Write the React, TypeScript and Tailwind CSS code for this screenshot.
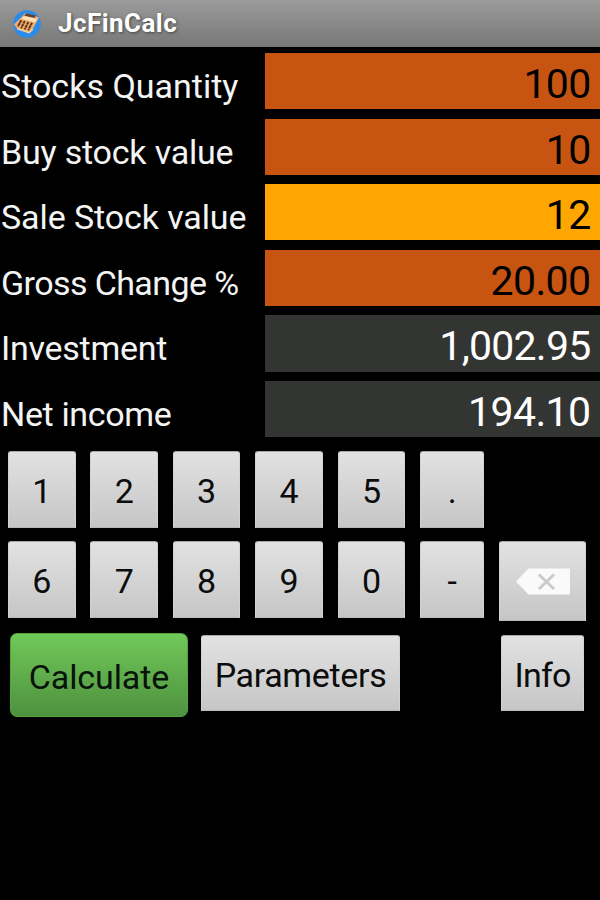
import React from "react";

const fields = [
  { label: "Stocks Quantity", value: "100", tone: "bg-[#c75511] text-black tracking-[-0.7px]", track: "tracking-[0px]" },
  { label: "Buy stock value", value: "10", tone: "bg-[#c75511] text-black tracking-[-0.7px]", track: "tracking-[-0.2px]" },
  { label: "Sale Stock value", value: "12", tone: "bg-[#ffa600] text-black tracking-[-0.7px]", track: "tracking-[-0.1px]" },
  { label: "Gross Change %", value: "20.00", tone: "bg-[#c75511] text-black tracking-[-0.6px]", track: "tracking-[-0.6px]" },
  { label: "Investment", value: "1,002.95", tone: "bg-[#333533] text-white tracking-[-0.75px]", track: "tracking-[-0.25px]" },
  { label: "Net income", value: "194.10", tone: "bg-[#333533] text-white tracking-[-0.6px]", track: "tracking-[-0.35px]" },
];

const keyRows = [
  ["1", "2", "3", "4", "5", "."],
  ["6", "7", "8", "9", "0", "-"],
];

const face =
  "block shrink-0 whitespace-nowrap rounded-t-[3px] border border-t-[#a9a9a9] border-x-[#d2d2d2] border-b-[#b9b9b9] bg-linear-to-b from-[#e2e2e2] to-[#c6c6c6] text-center text-[34px] text-[#0c0c0c]";

function AppIcon() {
  return (
    <svg className="ml-[13px] size-7 shrink-0" viewBox="0 0 28 28">
      <circle cx="14" cy="14" r="13.8" fill="#2b8be8" />
      <path d="M1 14.5 12.5 3 26 7.5l-6.5 12L16 22.5 4 18.5z" fill="#f0ae72" />
      <path d="M13 3.2 22.5 5.6l-.8 2.5-10.3-2.4z" fill="#5f4230" />
      <path d="M11 5.9 24 9l-2 3.2L8.6 8.7z" fill="#ffe2b8" />
      <path
        d="M8.3 10.2 4.8 16.6M11.8 11 8 18.3M15.4 12l-3.8 7.4M19 12.8l-3.8 7.4"
        stroke="#603315"
        strokeWidth="2"
        strokeDasharray="2.9 .4"
      />
      <path d="m4 18.7 12 4 3.8-3.4" fill="none" stroke="#ffd29c" strokeWidth="1.3" />
    </svg>
  );
}

function Backspace() {
  return (
    <svg className="ml-px h-[27px] w-[54px]" viewBox="0 0 54 27">
      <path d="M0 13.5 12.5.5H54v26H12.5z" fill="#fafafa" />
      <path d="m23 6.5 15 14.5m0-14.5L23 21" stroke="#c9cacd" strokeWidth="3" />
    </svg>
  );
}

export default function App() {
  return (
    <div className="flex h-[900px] w-[600px] flex-col overflow-hidden bg-black font-['Roboto',sans-serif]">
      <header className="flex h-[47px] shrink-0 items-center bg-linear-to-b from-[#9b9b9b] to-[#777777]">
        <AppIcon />
        <h1 className="ml-[17px] text-[26px] leading-[47px] font-bold tracking-[0.45px] text-white [text-shadow:1px_1px_3px_#444]">
          JcFinCalc
        </h1>
      </header>

      <section className="mt-[6px] flex h-[385px] shrink-0 flex-col gap-[9.4px]">
        {fields.map((f) => (
          <div key={f.label} className="flex h-[56.2px] shrink-0">
            <div className={`w-[265px] shrink-0 pl-px text-[34px] leading-[66px] whitespace-nowrap text-[#f4f4f4] ${f.track}`}>
              {f.label}
            </div>
            <div className={`flex-1 pr-[9.5px] text-right text-[41px] leading-[62px] ${f.tone}`}>{f.value}</div>
          </div>
        ))}
      </section>

      <section className="mt-[13px] flex h-[170px] shrink-0 flex-col gap-[13.5px] pl-2">
        {keyRows.map((row, r) => (
          <div key={r} className="flex items-start gap-[14.95px]">
            {row.map((k, i) => (
              <button key={k} className={`${face} h-[76.5px] leading-[79px] ${i === 5 ? "w-[64px]" : "w-[67.5px]"}`}>
                {k}
              </button>
            ))}
            {r === 1 && (
              <button className={`${face} flex! h-[80px] w-[86.5px] items-center justify-center`} aria-label="Delete">
                <Backspace />
              </button>
            )}
          </div>
        ))}
      </section>

      <section className="mt-[11.5px] flex shrink-0 items-start pl-[10px]">
        <button className="h-[84.5px] w-[178px] rounded-[7px] border border-[#4fa63d] bg-linear-to-b from-[#70c959] to-[#4f913f] text-[34px] leading-[86px] tracking-[-0.1px] text-[#08130a]">
          Calculate
        </button>
        <button className={`${face} mt-[2px] ml-[13px] h-[76.5px] w-[199px] leading-[78px] tracking-[-0.35px]`}>Parameters</button>
        <button className={`${face} mt-[2px] ml-[101px] h-[76.5px] w-[83px] leading-[78px] tracking-[-0.8px]`}>Info</button>
      </section>
    </div>
  );
}
